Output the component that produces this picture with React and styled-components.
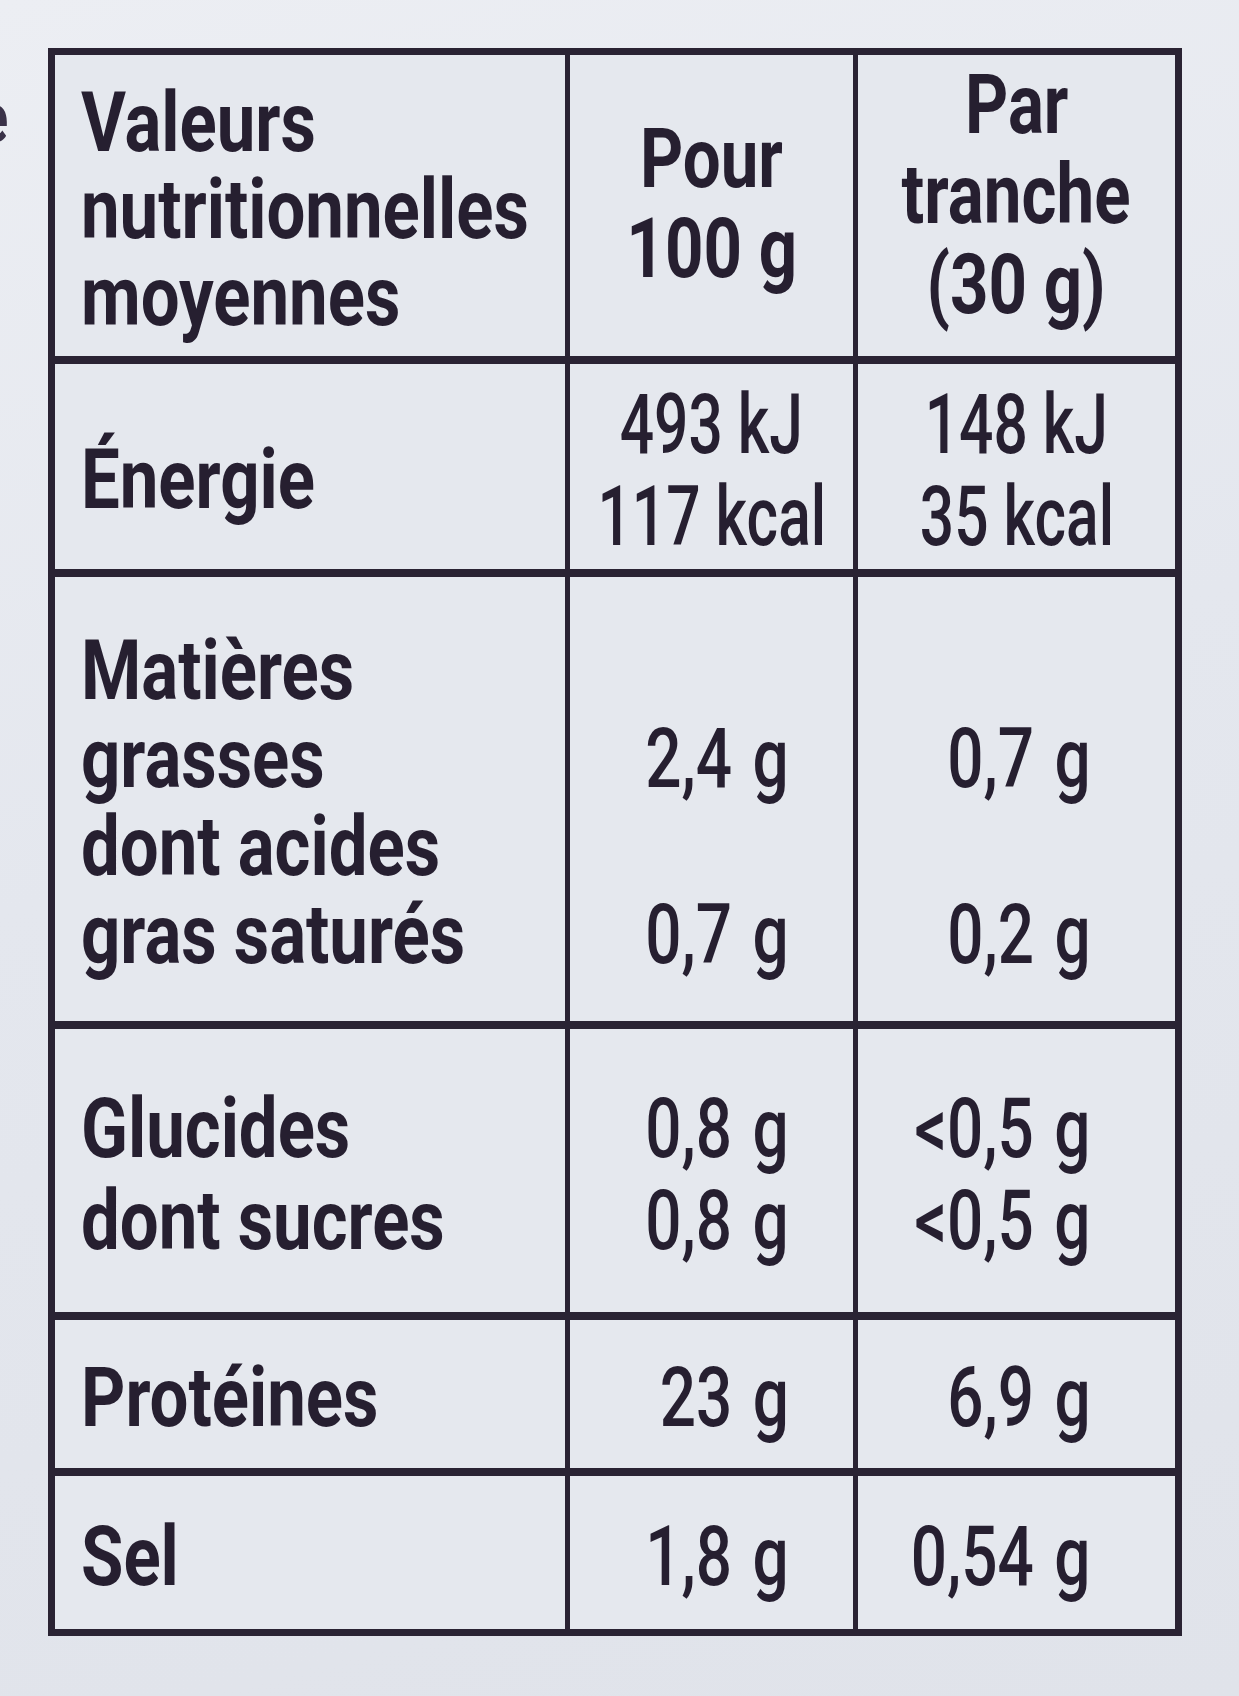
import styled, { createGlobalStyle } from "styled-components";

const GlobalStyle = createGlobalStyle`
    html, body {
        margin: 0;
        padding: 0;
    }
    body {
        background: linear-gradient(165deg, #eceef3 0%, #e4e7ee 45%, #e0e3ea 100%);
        min-height: 1696px;
        font-family: Roboto, "Liberation Sans", sans-serif;
        color: #261f30;
    }
`;

const INK = "#2a2333";

// ===== Layout =====
const Page = styled.div`
    display: flex;
    align-items: flex-start;
    padding-top: 48px;
    width: 1239px;
    height: 1648px;
    overflow: hidden;
`;

const Gutter = styled.div`
    width: 48px;
    flex: none;
    overflow: hidden;
    display: flex;
    flex-direction: column;
    padding-top: 24px;
    font-weight: 700;
    font-size: 70px;
    line-height: 92px;
    color: #3a3248;
`;

const GutterMark = styled.span`
    display: block;
    margin-left: -22px;
    transform: scaleX(0.8);
    transform-origin: left center;
`;

const Table = styled.div`
    display: grid;
    grid-template-columns: 510px 283px 317px;
    grid-template-rows: 301px 205px 444px 283px 148px 153px;
    column-gap: 5px;
    row-gap: 8px;
    border: 7px solid ${INK};
    background: ${INK};
`;

const Cell = styled.div`
    background: #e5e8ee;
    display: flex;
    flex-direction: column;
    justify-content: center;
    align-items: ${(p) =>
        p.$align === "right" ? "flex-end" : p.$align === "center" ? "center" : "flex-start"};
    padding: ${(p) => p.$pad || "0"};
    font-size: 84px;
    font-weight: ${(p) => (p.$value ? 500 : 700)};
    line-height: ${(p) => p.$lh || 88}px;
    word-spacing: ${(p) => (p.$value && p.$align === "right" ? "6px" : "0")};
    white-space: nowrap;
    overflow: hidden;
`;

const Line = styled.span`
    display: block;
    height: ${(p) => p.$lh || 88}px;
    transform: scaleX(${(p) => p.$sx || 0.8});
    transform-origin: ${(p) =>
        p.$align === "right" ? "right" : p.$align === "center" ? "center" : "left"} center;
`;

function Lines({ items, align, sx, lh }) {
    return items.map((t, i) => (
        <Line key={i} $align={align} $sx={sx} $lh={lh}>
            {t || "\u00a0"}
        </Line>
    ));
}

const rows = [
    {
        label: ["Valeurs", "nutritionnelles", "moyennes"],
        a: ["Pour", "100 g"],
        b: ["Par", "tranche", "(30 g)"],
        head: true,
    },
    {
        label: ["Énergie"],
        a: ["493 kJ", "117 kcal"],
        b: ["148 kJ", "35 kcal"],
        centered: true,
        labelPad: "26px 0 0 26px",
    },
    {
        label: ["Matières", "grasses", "dont acides", "gras saturés"],
        a: ["", "2,4 g", "", "0,7 g"],
        b: ["", "0,7 g", "", "0,2 g"],
    },
    {
        label: ["Glucides", "dont sucres"],
        a: ["0,8 g", "0,8 g"],
        b: ["<0,5 g", "<0,5 g"],
        lh: 92,
    },
    { label: ["Protéines"], a: ["23 g"], b: ["6,9 g"] },
    { label: ["Sel"], a: ["1,8 g"], b: ["0,54 g"] },
];

export default function App() {
    return (
        <>
            <GlobalStyle />
            <Page>
                <Gutter>
                    <GutterMark>e</GutterMark>
                    <GutterMark>,</GutterMark>
                    <GutterMark>,</GutterMark>
                    <GutterMark>:</GutterMark>
                </Gutter>
                <Table>
                    {rows.map((r, i) => {
                        const mid = r.head || r.centered;
                        const align = mid ? "center" : "right";
                        const lh = r.head ? 90 : r.centered ? 92 : r.lh || 88;
                        const sx = r.head ? 0.8 : r.centered ? 0.72 : 0.76;
                        return [
                            <Cell key={`l${i}`} $pad={r.labelPad || "8px 0 0 26px"} $lh={r.lh || 88}>
                                <Lines items={r.label} sx={0.82} lh={r.head ? 87 : r.lh || 88} />
                            </Cell>,
                            <Cell
                                key={`a${i}`}
                                $align={align}
                                $value={!r.head}
                                $lh={lh}
                                $pad={mid ? (r.head ? "0 0 4px 0" : "8px 0 0 0") : "8px 64px 0 0"}
                            >
                                <Lines items={r.a} align={align} sx={sx} lh={lh} />
                            </Cell>,
                            <Cell
                                key={`b${i}`}
                                $align={align}
                                $value={!r.head}
                                $lh={lh}
                                $pad={mid ? (r.head ? "0 0 22px 0" : "8px 0 0 0") : "8px 84px 0 0"}
                            >
                                <Lines items={r.b} align={align} sx={sx} lh={lh} />
                            </Cell>,
                        ];
                    })}
                </Table>
            </Page>
        </>
    );
}
